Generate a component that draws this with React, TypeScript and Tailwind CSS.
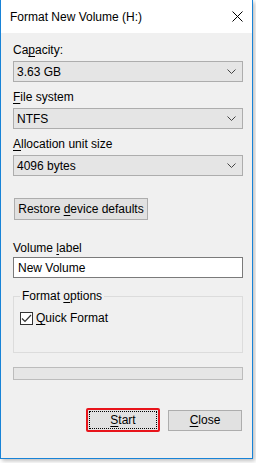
import React from 'react';

const font = { fontFamily: '"Liberation Sans", Arial, sans-serif' };

function U({ children }: { children: React.ReactNode }) {
  return <span className="underline underline-offset-[2px] decoration-[1px]">{children}</span>;
}

function Chevron() {
  return (
    <svg width="9" height="5" viewBox="0 0 9 5" className="text-[#444]">
      <polyline points="0.5,0.5 4.5,4.5 8.5,0.5" fill="none" stroke="currentColor" strokeWidth="1" />
    </svg>
  );
}

function Combo({ value }: { value: string }) {
  return (
    <div className="mt-[3px] h-[21px] flex items-center justify-between border border-[#adadad] bg-[#e5e5e5] pl-[3px] pr-[6px]">
      <span>{value}</span>
      <Chevron />
    </div>
  );
}

function Label({ children, mt }: { children: React.ReactNode; mt: string }) {
  return <div className={`${mt} h-[16px] leading-[16px]`}>{children}</div>;
}

export default function App() {
  return (
    <div className="w-[256px] h-[463px] bg-white text-[12px] text-black" style={font}>
      <div className="w-[253px] h-[459px] flex flex-col border-l border-r border-b border-[#1883d7] shadow-[2px_2px_4px_rgba(0,0,0,0.25)]">
        {/* Title bar */}
        <div className="h-[33px] bg-white flex items-center justify-between pl-[9px] pr-[9px] shrink-0">
          <span className="text-[12px]">Format New Volume (H:)</span>
          <svg width="11" height="11" viewBox="0 0 11 11">
            <path d="M0.5 0.5 L10.5 10.5 M10.5 0.5 L0.5 10.5" stroke="#000" strokeWidth="1" />
          </svg>
        </div>

        {/* Body */}
        <div className="flex-1 bg-[#f0f0f0] pl-[12px] pr-[9px] flex flex-col">
          <Label mt="mt-[9px]">Ca<U>p</U>acity:</Label>
          <Combo value="3.63 GB" />

          <Label mt="mt-[7px]"><U>F</U>ile system</Label>
          <Combo value="NTFS" />

          <Label mt="mt-[7px]"><U>A</U>llocation unit size</Label>
          <Combo value="4096 bytes" />

          <button className="mt-[22px] ml-[1px] w-[134px] h-[22px] border border-[#adadad] bg-[#e1e1e1] text-center">
            Restore <U>d</U>evice defaults
          </button>

          <Label mt="mt-[20px]">Volume <U>l</U>abel</Label>
          <div className="mt-[1px] h-[21px] border border-[#7a7a7a] bg-white flex items-center pl-[4px]">
            New Volume
          </div>

          <fieldset className="mt-[10px] h-[65px] border border-[#dcdcdc]">
            <legend className="ml-[6px] px-[2px] h-[16px] leading-[16px]">
              Format <U>o</U>ptions
            </legend>
            <div className="mt-[6px] ml-[6px] flex items-center h-[16px]">
              <div className="w-[13px] h-[13px] border border-[#333] bg-white flex items-center justify-center">
                <svg width="11" height="9" viewBox="0 0 11 9">
                  <polyline points="1,4.5 4,7.5 10,1" fill="none" stroke="#333" strokeWidth="1.2" />
                </svg>
              </div>
              <span className="ml-[3px]"><U>Q</U>uick Format</span>
            </div>
          </fieldset>

          <div className="mt-[14px] h-[13px] border border-[#bcbcbc] bg-[#e6e6e6]" />

          <div className="mt-[28px] flex items-center justify-end gap-[8px] pr-[1px]">
            <button className="w-[74px] h-[24px] border-2 border-[#e8141b] rounded-[2px] bg-[#e1e1e1] p-[1px]">
              <div className="w-full h-full border border-dotted border-black flex items-center justify-center">
                <span><U>S</U>tart</span>
              </div>
            </button>
            <button className="w-[74px] h-[21px] border border-[#adadad] bg-[#e1e1e1] flex items-center justify-center">
              <span><U>C</U>lose</span>
            </button>
          </div>
        </div>
      </div>
    </div>
  );
}
